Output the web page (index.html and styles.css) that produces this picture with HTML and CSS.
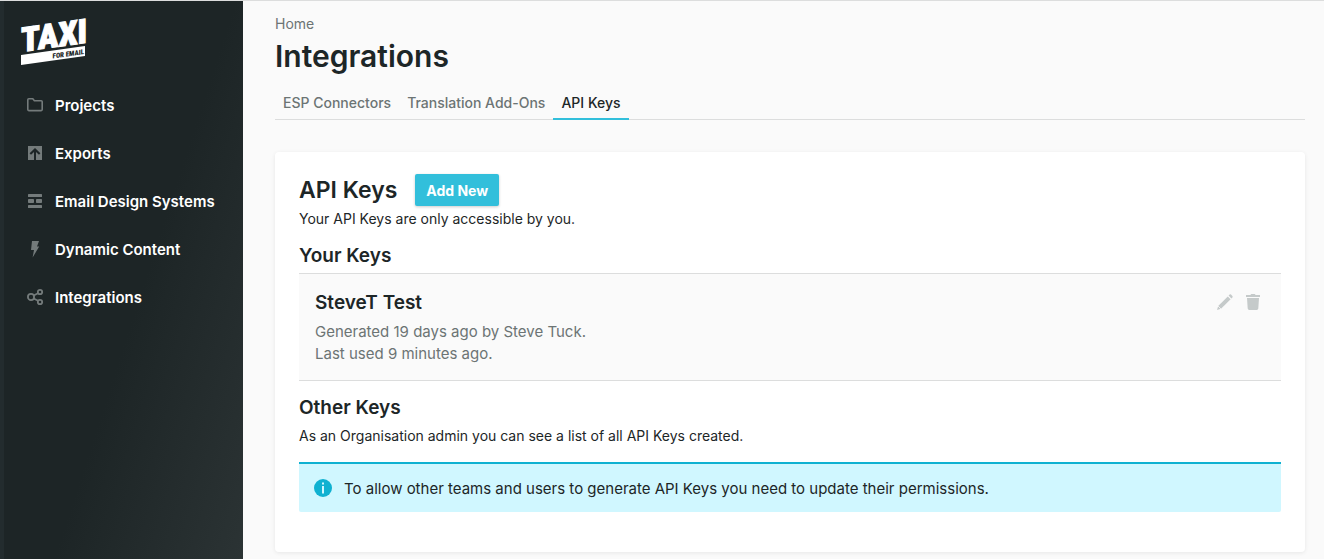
FILE: index.html
```html
<!DOCTYPE html>
<html lang="en">
<head>
<meta charset="utf-8">
<meta name="viewport" content="width=device-width, initial-scale=1">
<title>Integrations</title>
<link rel="stylesheet" href="styles.css">
</head>
<body>
<div class="app">
  <aside class="sidebar">
    <a class="brand" href="#" aria-label="Taxi for Email">
      <svg width="64" height="50" viewBox="0 0 64 50">
        <g transform="skewY(-8)">
          <text class="brand-name" x="0" y="36">TAXI</text>
          <rect x="0" y="39" width="64" height="10" fill="#fff"/>
          <text class="brand-tag" x="63" y="47" text-anchor="end">FOR EMAIL</text>
        </g>
      </svg>
    </a>
    <nav class="menu">
      <a class="menu-item" href="#">
        <svg width="16" height="16" viewBox="0 0 16 16"><path d="M1.8 1.8H5.8L7.4 3.8H14.2Q15.2 3.8 15.2 4.8V12.6Q15.2 13.6 14.2 13.6H1.8Q.8 13.6 .8 12.6V2.8Q.8 1.8 1.8 1.8Z" fill="none" stroke="currentColor" stroke-width="1.6"/></svg>
        <span>Projects</span>
      </a>
      <a class="menu-item" href="#">
        <svg width="16" height="16" viewBox="0 0 16 16"><path d="M1 1H15V15H9V7L12 9.800L13.400 8.300L8 3L2.600 8.300L4 9.800L7 7V15H1Z" fill="currentColor"/></svg>
        <span>Exports</span>
      </a>
      <a class="menu-item" href="#">
        <svg width="16" height="16" viewBox="0 0 16 16" fill="currentColor"><rect x="1" y="1" width="14" height="3" rx=".5"/><rect x="1" y="6" width="6" height="4" rx=".8"/><rect x="9" y="6" width="6" height="4" rx=".8"/><rect x="1" y="12" width="14" height="3" rx=".5"/></svg>
        <span>Email Design Systems</span>
      </a>
      <a class="menu-item" href="#">
        <svg width="16" height="16" viewBox="0 0 16 16"><path d="M5 0H12L10 5.600H12.200L5.600 16.500L7 9H4Z" fill="currentColor"/></svg>
        <span>Dynamic Content</span>
      </a>
      <a class="menu-item" href="#">
        <svg width="16" height="16" viewBox="0 0 16 16" fill="none" stroke="currentColor" stroke-width="1.800"><circle cx="4" cy="8" r="3.100"/><circle cx="13" cy="3" r="2.200"/><circle cx="13" cy="13" r="2.200"/><path d="M6.700 6.500L11 4.200M6.700 9.500L11 11.800"/></svg>
        <span>Integrations</span>
      </a>
    </nav>
  </aside>
  <main class="content">
    <a class="breadcrumb" href="#">Home</a>
    <h1 class="page-title">Integrations</h1>
    <nav class="tabs">
      <a class="tab" href="#">ESP Connectors</a>
      <a class="tab" href="#">Translation Add-Ons</a>
      <a class="tab tab-active" href="#" aria-current="page">API Keys</a>
    </nav>
    <section class="card">
      <header class="card-head">
        <h2 class="card-title">API Keys</h2>
        <button class="button" type="button">Add New</button>
      </header>
      <p class="note">Your API Keys are only accessible by you.</p>
      <h3 class="section-title">Your Keys</h3>
      <article class="key">
        <div class="key-info">
          <h4 class="key-name">SteveT Test</h4>
          <p class="key-meta">Generated 19 days ago by Steve Tuck.<br>Last used 9 minutes ago.</p>
        </div>
        <div class="key-actions">
          <button class="icon-button" type="button" aria-label="Edit key">
            <svg width="16" height="16" viewBox="0 0 16 16" fill="currentColor"><path d="M1.200 12L10.800 2.400L13.600 5.200L4 14.800L0 16Z"/><path d="M11.600 1.600L12.600 .6Q13.300 0 14 .6L15.400 2Q16 2.700 15.400 3.400L14.400 4.400Z"/><path d="M1 12L4 15" stroke="#fafafa" stroke-width=".8" fill="none"/></svg>
          </button>
          <button class="icon-button" type="button" aria-label="Delete key">
            <svg width="16" height="16" viewBox="0 0 16 16" fill="currentColor"><path d="M1 1H5.500Q5.800 0 6.500 0H9.500Q10.200 0 10.500 1H15V3H1ZM2 4H14L13.300 14.600Q13.100 16 11.800 16H4.200Q2.900 16 2.700 14.600Z"/></svg>
          </button>
        </div>
      </article>
      <h3 class="section-title">Other Keys</h3>
      <p class="note note-spaced">As an Organisation admin you can see a list of all API Keys created.</p>
      <div class="notice" role="note">
        <svg width="18" height="18" viewBox="0 0 18 18"><circle cx="9" cy="9" r="9" fill="#0fb1d1"/><path d="M8 3.500H10V5.500H8ZM8 7H10V14.500H8Z" fill="#d0f7ff"/></svg>
        <span>To allow other teams and users to generate API Keys you need to update their permissions.</span>
      </div>
    </section>
  </main>
</div>
</body>
</html>
```
FILE: styles.css
```css
* { box-sizing: border-box; }
body {
  margin: 0;
  background: #fafafa;
  color: #1d2627;
  font-family: Inter, Roboto, "Liberation Sans", sans-serif;
  font-size: 15px;
}
h1, h2, h3, h4, p { margin: 0; font-weight: 600; }
p { font-weight: 400; }
a { color: inherit; text-decoration: none; }
svg { display: block; flex: none; overflow: visible; }
.app {
  display: flex;
  min-height: 100vh;
  border-top: 1px solid #dcdddd;
}
.sidebar {
  flex: none;
  width: 243px;
  border-left: 4px solid #232c2e;
  background: linear-gradient(108deg, #1d2526 55%, #2b3334 100%);
  color: #fff;
}
.brand { display: block; width: 64px; margin: 15px 0 15px 17px; }
.brand-name {
  font: 900 34px "Roboto Condensed", "Open Sans Condensed", Roboto, sans-serif;
  fill: #fff;
  stroke: #fff;
  stroke-width: 1px;
}
.brand-tag {
  font: 900 7px "Roboto Condensed", "Open Sans Condensed", Roboto, sans-serif;
  fill: #1d2627;
}
.menu-item {
  display: flex;
  align-items: center;
  gap: 12px;
  height: 48px;
  padding-left: 23px;
  font-weight: 600;
  white-space: nowrap;
}
.menu-item svg { color: #747b7b; }
.content {
  flex: 1;
  min-width: 0;
  padding: 13px 19px 7px 32px;
}
.breadcrumb {
  display: block;
  font-size: 14px;
  line-height: 20px;
  color: #6c7474;
}
.page-title { font-size: 30px; line-height: 44px; }
.tabs {
  display: flex;
  margin-top: 4px;
  border-bottom: 1px solid #dcdddd;
}
.tab {
  padding: 6px 8px 0;
  margin-bottom: -1px;
  border-bottom: 2px solid transparent;
  font-size: 14px;
  font-weight: 500;
  line-height: 30px;
  color: #6c7474;
}
.tab-active { border-bottom-color: #32bfdb; color: #1d2627; }
.card {
  margin-top: 32px;
  padding: 22px 24px 40px;
  border-radius: 4px;
  background: #fff;
  box-shadow: 0 1px 4px rgba(0, 0, 0, .08);
}
.card-head { display: flex; align-items: center; gap: 18px; }
.card-title { font-size: 23px; line-height: 32px; }
.button {
  height: 32px;
  padding: 0 11px;
  border: 0;
  border-radius: 2px;
  background: #32bfdb;
  box-shadow: 0 1px 3px rgba(0, 0, 0, .2);
  color: #fff;
  font: inherit;
  font-size: 14px;
  font-weight: 700;
}
.note { padding-top: 3px; font-size: 14px; line-height: 20px; }
.note-spaced { padding-top: 4px; }
.section-title { margin-top: 13px; font-size: 19px; line-height: 28px; }
.key {
  display: flex;
  justify-content: space-between;
  margin-top: 3px;
  padding: 15px 20px 15px 16px;
  border: 1px solid #dcdddd;
  border-width: 1px 0;
  background: #fafafa;
}
.key-name { font-size: 19px; line-height: 28px; }
.key-meta { margin-top: 4px; line-height: 22px; color: #6c7474; }
.key-actions { display: flex; align-items: flex-start; gap: 12px; padding-top: 5px; }
.icon-button { padding: 0; border: 0; background: none; color: #c5caca; }
.notice {
  display: flex;
  align-items: center;
  gap: 12px;
  min-height: 50px;
  margin-top: 16px;
  padding: 0 15px;
  border-top: 2px solid #0fb1d1;
  border-radius: 0 0 2px 2px;
  background: #d0f7ff;
}
```
